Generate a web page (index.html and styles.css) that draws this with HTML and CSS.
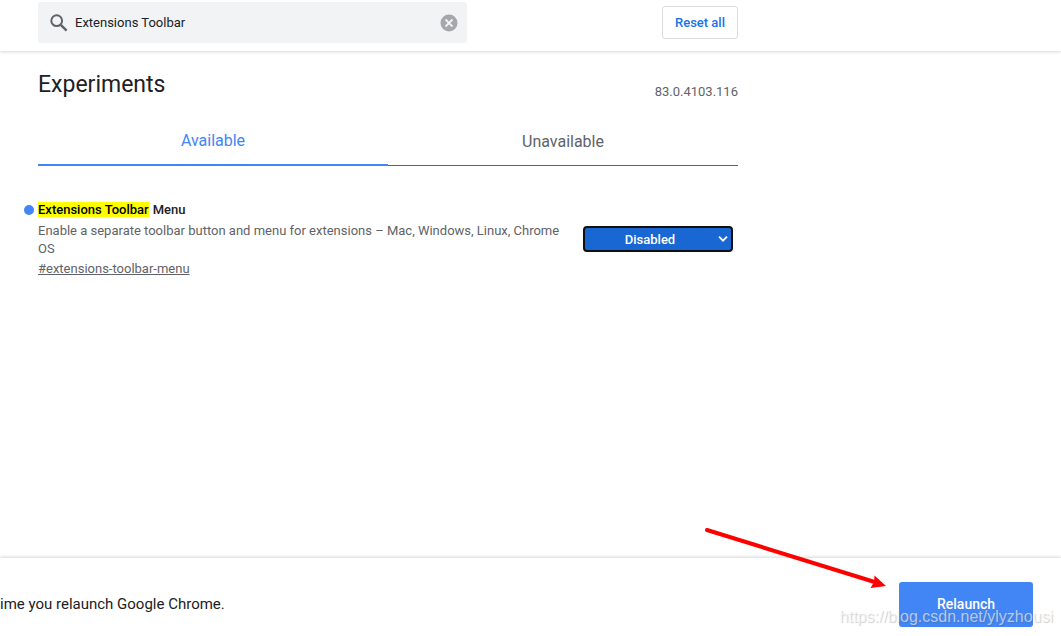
FILE: index.html
```html
<!DOCTYPE html>
<html lang="en">
<head>
<meta charset="utf-8">
<title>Experiments</title>
<link rel="stylesheet" href="styles.css">
</head>
<body>
<header class="topbar">
  <div class="column topbar-row">
    <div class="search">
      <svg class="search-icon" viewBox="0 0 18 18" aria-hidden="true"><circle cx="6.7" cy="6.7" r="5.4" fill="none" stroke="#5f6368" stroke-width="2"/><path d="M10.8 10.8L16.6 16.6" stroke="#5f6368" stroke-width="2.4"/></svg>
      <input class="search-input" type="text" aria-label="Search flags" value="Extensions Toolbar">
      <button class="clear" type="button" aria-label="Clear search"><svg viewBox="0 0 18 18"><circle cx="9" cy="9" r="8.5" fill="#a5a8ab"/><path d="M5.5 5.5L12.5 12.5M12.5 5.5L5.5 12.5" stroke="#f1f3f4" stroke-width="1.8"/></svg></button>
    </div>
    <button class="reset" type="button">Reset all</button>
  </div>
</header>
<main class="column content">
  <div class="heading">
    <h1 class="title">Experiments</h1>
    <span class="version">83.0.4103.116</span>
  </div>
  <div class="tabs" role="tablist">
    <button class="tab tab-active" type="button" role="tab" aria-selected="true">Available</button>
    <button class="tab" type="button" role="tab" aria-selected="false">Unavailable</button>
  </div>
  <section class="flag">
    <div class="flag-text">
      <h2 class="flag-name" id="flag-name"><mark class="match">Extensions Toolbar</mark> Menu</h2>
      <p class="flag-description">Enable a separate toolbar button and menu for extensions – Mac, Windows, Linux, Chrome OS</p>
      <a class="permalink" href="#extensions-toolbar-menu">#extensions-toolbar-menu</a>
    </div>
    <div class="select-box">
      <select class="flag-select" aria-labelledby="flag-name">
        <option>Default</option>
        <option>Enabled</option>
        <option selected>Disabled</option>
      </select>
      <svg class="chevron" viewBox="0 0 10 8" aria-hidden="true"><path d="M1 1.7L5 5.7L9 1.7" fill="none" stroke="#fff" stroke-width="1.8"/></svg>
    </div>
  </section>
</main>
<footer class="restart">
  <p class="restart-text">ime you relaunch Google Chrome.</p>
  <button class="relaunch" type="button">Relaunch</button>
</footer>
<svg class="arrow" viewBox="0 0 184 64" aria-hidden="true"><path d="M4 5L170 56.5" stroke="#f00" stroke-width="4" stroke-linecap="round"/><path d="M183 61L171.5 50.5L171 57L167.5 63Z" fill="#f00"/></svg>
<span class="watermark">https://blog.csdn.net/ylyzhousi</span>
</body>
</html>
```
FILE: styles.css
```css
* {
  box-sizing: border-box;
}

body {
  margin: 0;
  min-height: 100vh;
  display: flex;
  flex-direction: column;
  overflow: hidden;
  position: relative;
  background: #fff;
  color: #202124;
  font-family: Roboto, sans-serif;
  font-size: 13px;
}

button,
input,
select {
  font: inherit;
}

.column {
  width: 100%;
  max-width: 776px;
  padding: 0 38px;
}

.topbar {
  padding: 2px 0 8px;
  box-shadow: 0 1px 3px rgba(0, 0, 0, 0.16);
}

.topbar-row {
  display: flex;
  align-items: center;
  justify-content: space-between;
}

.search {
  flex: 0 1 429px;
  display: flex;
  align-items: center;
  height: 41px;
  padding: 0 9px 0 12px;
  border-radius: 3px;
  background: #f1f3f4;
}

.search-icon {
  width: 18px;
  height: 18px;
}

.search-input {
  flex: 1;
  min-width: 0;
  padding: 0 7px;
  border: 0;
  outline: 0;
  background: none;
  color: #202124;
}

.clear {
  display: flex;
  width: 18px;
  height: 18px;
  padding: 0;
  border: 0;
  background: none;
}

.clear svg {
  width: 100%;
}

.reset {
  height: 33px;
  padding: 0 12px;
  border: 1px solid #dadce0;
  border-radius: 3px;
  background: #fff;
  color: #1a73e8;
  font-weight: 500;
}

.heading {
  display: flex;
  align-items: flex-end;
  justify-content: space-between;
  padding-top: 20px;
}

.title {
  margin: 0;
  font-size: 23px;
  line-height: 28px;
  font-weight: 400;
}

.version {
  color: #5f6368;
  line-height: 14px;
}

.tabs {
  display: grid;
  grid-template-columns: 1fr 1fr;
  margin-top: 16px;
}

.tab {
  height: 51px;
  padding: 2px 0 0;
  border: 0;
  border-bottom: 1px solid #5f6368;
  background: none;
  color: #5f6368;
  font-size: 16px;
}

.tab-active {
  border-bottom: 2px solid #4285f4;
  color: #4285f4;
}

.flag {
  display: flex;
  justify-content: space-between;
  margin-top: 34px;
  padding-right: 5px;
}

.flag-text {
  flex: 0 1 530px;
}

.flag-name {
  display: flex;
  align-items: center;
  gap: 4px;
  margin: 0 0 3px -14px;
  font-size: 13px;
  line-height: 19px;
  font-weight: 500;
}

.flag-name::before {
  content: "";
  width: 10px;
  height: 10px;
  border-radius: 50%;
  background: #4285f4;
}

.match {
  background: #ff0;
  color: #000;
  line-height: 15px;
}

.flag-description {
  margin: 0 0 2px;
  color: #5f6368;
  line-height: 18px;
}

.permalink {
  color: #5f6368;
  line-height: 18px;
}

.select-box {
  position: relative;
  flex: 0 0 150px;
  margin-top: 26px;
}

.flag-select {
  appearance: none;
  display: block;
  width: 100%;
  height: 26px;
  padding: 0 16px 0 0;
  border: 2px solid #101010;
  border-radius: 4px;
  background: #1967d2;
  color: #fff;
  font-weight: 500;
  text-align: center;
  text-align-last: center;
}

.chevron {
  position: absolute;
  top: 9px;
  right: 5px;
  width: 10px;
  height: 8px;
  pointer-events: none;
}

.restart {
  display: flex;
  align-items: center;
  justify-content: space-between;
  margin-top: auto;
  padding: 24px 28px 9px 0;
  box-shadow: 0 -1px 3px rgba(0, 0, 0, 0.16);
}

.restart-text {
  margin: 0;
  padding-bottom: 2px;
  font-size: 15px;
}

.relaunch {
  width: 134px;
  height: 45px;
  padding: 0 0 2px;
  border: 0;
  border-radius: 3px;
  background: #4285f4;
  color: #fff;
  font-size: 14px;
  font-weight: 500;
}

.arrow {
  position: absolute;
  right: 174px;
  bottom: 47px;
  width: 184px;
  height: 64px;
}

.watermark {
  position: absolute;
  right: 8px;
  bottom: 10px;
  color: rgba(255, 255, 255, 0.6);
  font-family: "Liberation Sans", sans-serif;
  font-size: 16px;
  line-height: 18px;
  text-shadow: 1px 1px 1px rgba(90, 90, 90, 0.3);
  pointer-events: none;
}
```
